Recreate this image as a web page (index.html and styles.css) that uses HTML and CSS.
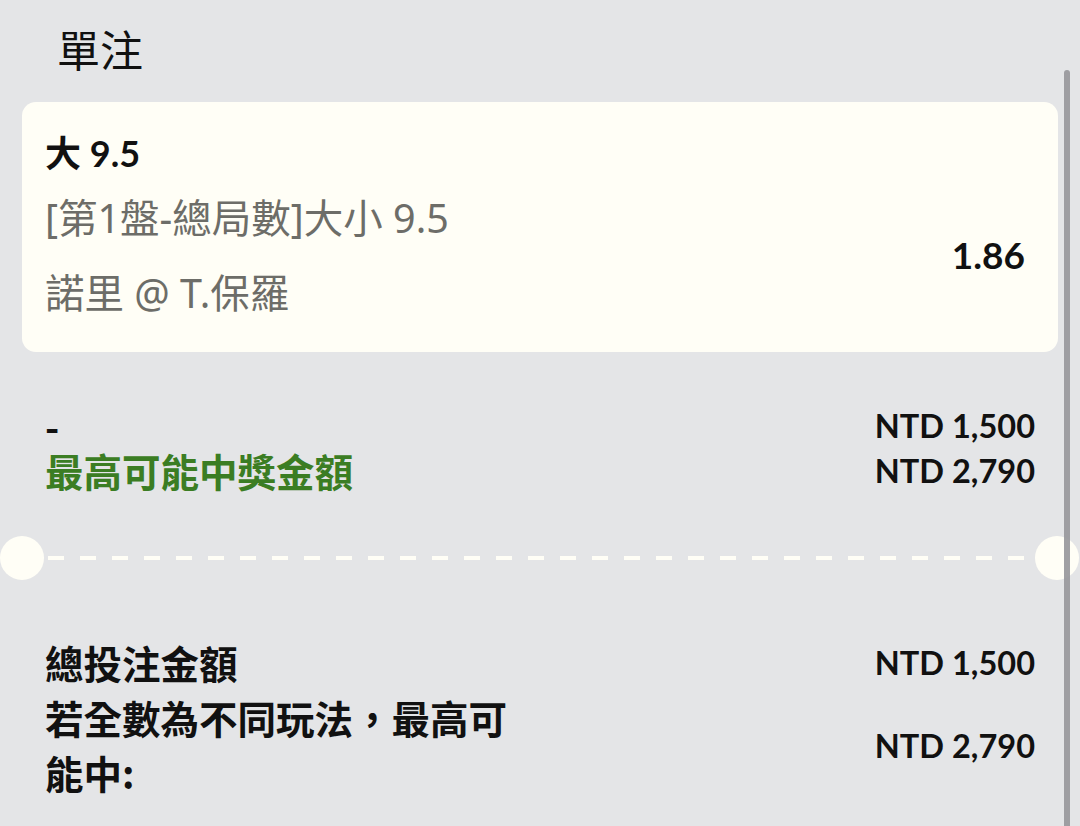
FILE: index.html
```html
<!DOCTYPE html>
<html lang="zh-Hant">
<head>
    <meta charset="UTF-8">
    <meta name="viewport" content="width=device-width, initial-scale=1.0">
    <title>單注</title>
    <link rel="stylesheet" href="styles.css">
</head>
<body>
    <div class="slip">
        <h1 class="slip-title">單注</h1>

        <div class="bet-card">
            <div class="bet-info">
                <div class="pick">大 9.5</div>
                <div class="market">[第1盤-總局數]大小 9.5</div>
                <div class="match">諾里 @ T.保羅</div>
            </div>
            <div class="odds">1.86</div>
        </div>

        <div class="stake">
            <div class="row">
                <span class="label dash">-</span>
                <span class="amount">NTD 1,500</span>
            </div>
            <div class="row">
                <span class="label win">最高可能中獎金額</span>
                <span class="amount">NTD 2,790</span>
            </div>
        </div>
    </div>

    <div class="divider"></div>

    <div class="slip">
        <div class="summary">
            <div class="row">
                <span class="label">總投注金額</span>
                <span class="amount">NTD 1,500</span>
            </div>
            <div class="row">
                <span class="label wrap">若全數為不同玩法，最高可能中:</span>
                <span class="amount">NTD 2,790</span>
            </div>
        </div>
    </div>

    <div class="scrollbar"></div>
</body>
</html>
```

FILE: styles.css
```css
body {
    font-family: 'Lato', 'Noto Sans CJK TC', sans-serif;
    margin: 0;
    background: #e4e5e7;
    color: #111;
    width: 1080px;
    height: 826px;
    overflow: hidden;
}
.slip {
    padding: 0 22px;
}
.slip-title {
    font-family: 'Noto Sans CJK TC', sans-serif;
    font-size: 43px;
    font-weight: 400;
    line-height: 60px;
    margin: 0;
    padding: 18px 0 24px 35px;
}
.bet-card {
    background: #fffef6;
    border-radius: 14px;
    display: flex;
    justify-content: space-between;
    padding: 28px 33px 33px 23px;
}
.pick {
    font-family: 'Lato', 'Noto Sans CJK TC', sans-serif;
    font-size: 36px;
    font-weight: 700;
    line-height: 46px;
}
.market,
.match {
    font-family: 'Noto Sans', 'Noto Sans CJK TC', sans-serif;
    font-size: 39.5px;
    color: #6d6d68;
    line-height: 52px;
}
.market {
    margin-top: 16px;
}
.match {
    margin-top: 23px;
}
.odds {
    align-self: center;
    margin-top: 60px;
    font-size: 37px;
    font-weight: 700;
}
.stake {
    padding: 51px 23px 0;
}
.summary {
    padding: 55px 23px 0;
}
.row {
    display: flex;
    justify-content: space-between;
    align-items: center;
}
.stake .row {
    height: 45px;
}
.summary .row {
    min-height: 55px;
}
.label {
    font-family: 'Noto Sans CJK TC', sans-serif;
    font-size: 38.5px;
    font-weight: 700;
    line-height: 55px;
}
.label.dash,
.label.win {
    line-height: 45px;
}
.label.win {
    color: #3b7d23;
}
.label.wrap {
    width: 480px;
}
.amount {
    font-size: 32.5px;
    font-weight: 700;
    line-height: 45px;
}
.divider {
    position: relative;
    height: 44px;
    margin: 43px 50px 0 48px;
    background: repeating-linear-gradient(90deg, #fffef6 0 16px, transparent 16px 32px) 0 20px / 100% 4px no-repeat;
}
.divider::before,
.divider::after {
    content: '';
    position: absolute;
    top: 0;
    width: 44px;
    height: 44px;
    border-radius: 50%;
    background: #fffef6;
}
.divider::before {
    left: -48px;
}
.divider::after {
    right: -49px;
}
.scrollbar {
    position: fixed;
    top: 70px;
    right: 10px;
    width: 6px;
    height: 780px;
    border-radius: 3px;
    background: #96969a;
    opacity: 0.9;
}
```
